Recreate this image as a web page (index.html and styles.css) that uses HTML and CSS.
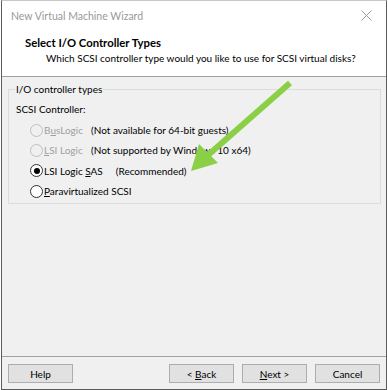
FILE: index.html
```html
<!DOCTYPE html>
<html>
<head>
<meta charset="utf-8">
<link rel="stylesheet" href="styles.css">
</head>
<body>
<div class="window">
  <div class="titlebar">
    <span class="title">New Virtual Machine Wizard</span>
    <svg class="close" width="11" height="11" viewBox="0 0 11 11"><path d="M0.5 0.5L10.5 10.5M10.5 0.5L0.5 10.5" stroke="#9a9a9a" stroke-width="1" fill="none"/></svg>
  </div>
  <div class="header">
    <div class="h-title">Select I/O Controller Types</div>
    <div class="h-sub">Which SCSI controller type would you like to use for SCSI virtual disks?</div>
  </div>
  <div class="content">
    <fieldset class="group">
      <legend>I/O controller types</legend>
      <div class="label">SCSI Controller:</div>
      <div class="row disabled">
        <span class="radio"></span><span class="name">B<u>u</u>sLogic</span><span class="note">(Not available for 64-bit guests)</span>
      </div>
      <div class="row disabled">
        <span class="radio"></span><span class="name"><u>L</u>SI Logic</span><span class="note">(Not supported by Windows 10 x64)</span>
      </div>
      <div class="row">
        <span class="radio checked"></span><span class="name">LSI Logic <u>S</u>AS</span><span class="note rec">(Recommended)</span>
      </div>
      <div class="row">
        <span class="radio"></span><span class="name"><u>P</u>aravirtualized SCSI</span>
      </div>
    </fieldset>
    <svg class="arrow" width="120" height="100" viewBox="0 0 120 100">
      <line x1="109" y1="3" x2="26" y2="76" stroke="#8bcf47" stroke-width="6" stroke-linecap="butt"/>
      <polygon points="10,91 18,64 37,83" fill="#8bcf47"/>
    </svg>
  </div>
  <div class="footer">
    <button class="btn">Help</button>
    <div class="spacer"></div>
    <button class="btn">&lt; <u>B</u>ack</button>
    <button class="btn"><u>N</u>ext &gt;</button>
    <button class="btn">Cancel</button>
  </div>
</div>
</body>
</html>
```

FILE: styles.css
```css
* { box-sizing: border-box; }
html, body { margin: 0; padding: 0; background: #ffffff; }
body {
  font-family: Lato, "Noto Sans", sans-serif;
  font-size: 10px;
  color: #000;
  white-space: nowrap;
}
.window {
  position: relative;
  margin-left: 1px;
  width: 386px;
  height: 390px;
  border: 1px solid #5c5c5c;
  border-top-color: #c8c8c8;
  background: #f0f0f0;
  display: flex;
  flex-direction: column;
}
.titlebar {
  height: 29px;
  background: #fff;
  display: flex;
  align-items: center;
  padding-left: 9px;
  padding-right: 14px;
}
.title { color: #999; flex: 1; font-size: 10.5px; }
.close { display: block; }
.header {
  height: 47px;
  background: #fff;
  border-bottom: 1px solid #a0a0a0;
  padding-left: 23px;
  padding-top: 4px;
}
.h-title { font-weight: bold; line-height: 17px; font-size: 11.3px; }
.h-sub { padding-left: 21px; line-height: 15px; }
.content {
  position: relative;
  flex: 1;
  padding: 5px 5px 0 6px;
}
.group {
  margin: 0;
  border: 1px solid #dcdcdc;
  padding: 0 0 6px 7px;
  height: 122px;
}
.group legend {
  padding: 0 1px;
  margin-left: -1px;
  line-height: 14px;
}
.label { line-height: 16px; margin-top: 5px; margin-bottom: 3px; }
.row {
  display: flex;
  align-items: center;
  height: 20.3px;
  padding-left: 14px;
}
.radio {
  width: 13px;
  height: 13px;
  border-radius: 50%;
  border: 1px solid #333;
  background: #fff;
  position: relative;
  margin-right: 1px;
  flex: none;
}
.radio.checked::after {
  content: "";
  position: absolute;
  left: 2.5px; top: 2.5px;
  width: 6px; height: 6px;
  border-radius: 50%;
  background: #000;
}
.disabled .radio { border-color: #bfbfbf; background: #f0f0f0; }
.disabled .name { color: #a0a0a0; }
.name { min-width: 47px; }
.rec { margin-left: 13px; }
.arrow {
  position: absolute;
  left: 179px;
  top: 3px;
}
.footer {
  margin-top: auto;
  border-top: 1px solid #a0a0a0;
  height: 33px;
  display: flex;
  align-items: flex-start;
  padding: 7px 6px 0 6px;
  gap: 8px;
}
.spacer { flex: 1; }
.btn {
  width: 65px;
  height: 19px;
  background: #e1e1e1;
  border: 1px solid #adadad;
  font-family: inherit;
  font-size: 10px;
  padding: 0;
  line-height: 16px;
  color: #000;
}
```
